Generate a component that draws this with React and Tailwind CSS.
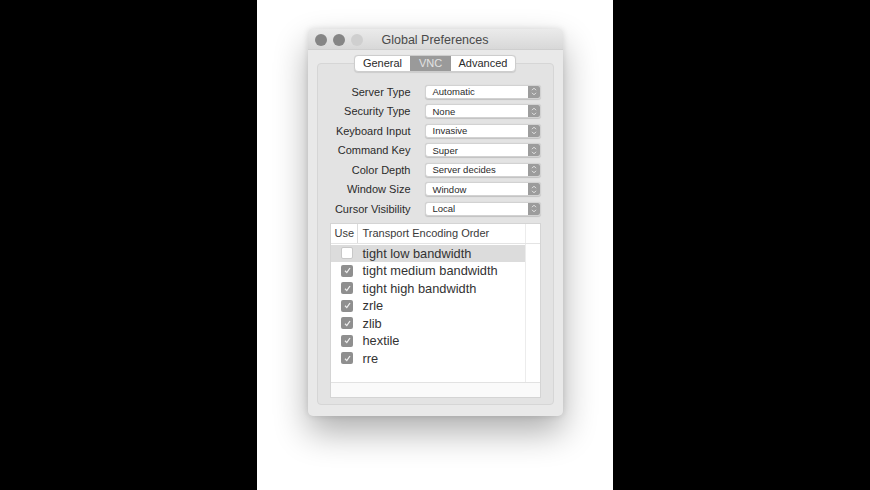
import React from "react";

const settings = [
  ["Server Type", "Automatic"],
  ["Security Type", "None"],
  ["Keyboard Input", "Invasive"],
  ["Command Key", "Super"],
  ["Color Depth", "Server decides"],
  ["Window Size", "Window"],
  ["Cursor Visibility", "Local"],
];

const encodings = [
  ["tight low bandwidth", false],
  ["tight medium bandwidth", true],
  ["tight high bandwidth", true],
  ["zrle", true],
  ["zlib", true],
  ["hextile", true],
  ["rre", true],
];

function PopUp({ value }) {
  return (
    <div className="flex h-[14px] w-[116px] items-stretch rounded-[3px] border border-[#d2d2d2] bg-white shadow-[0_0.5px_1px_rgba(0,0,0,0.15)]">
      <div className="flex flex-1 items-center pl-[7px] text-[9.5px] leading-none text-[#2a2a2a]">{value}</div>
      <div className="flex w-[12px] flex-col items-center justify-center rounded-r-[2px] bg-[#9c9c9c]">
        <svg width="6" height="9" viewBox="0 0 6 9" fill="none" stroke="#e6e6e6" strokeWidth="1">
          <path d="M1 3.2 L3 1.2 L5 3.2" />
          <path d="M1 5.8 L3 7.8 L5 5.8" />
        </svg>
      </div>
    </div>
  );
}

function Check({ on }) {
  if (!on) {
    return <div className="h-[12px] w-[12px] rounded-[2px] border border-[#c8c8c8] bg-white" />;
  }
  return (
    <div className="flex h-[12px] w-[12px] items-center justify-center rounded-[2px] bg-[#8f8f8f]">
      <svg width="9" height="9" viewBox="0 0 9 9" fill="none" stroke="#eeeeee" strokeWidth="1.3">
        <path d="M2 4.8 L3.8 6.6 L7 2" />
      </svg>
    </div>
  );
}

export default function App() {
  return (
    <div className="flex h-[490px] w-[870px] justify-center bg-black" style={{ fontFamily: '"Liberation Sans", Arial, sans-serif' }}>
      <div className="flex h-full w-[356px] justify-center bg-white pt-[29px]">
        <div className="h-[387px] w-[255px] rounded-[5px] bg-[#e9e9e9] shadow-[0_16px_34px_rgba(0,0,0,0.32),0_0_6px_rgba(0,0,0,0.12)]">
          {/* title bar */}
          <div className="relative flex h-[21px] items-center justify-center rounded-t-[5px] border-b border-[#cfcfcf] bg-gradient-to-b from-[#ebebeb] to-[#d8d8d8] pt-[2px]">
            <div className="absolute left-[7px] top-[5px] flex gap-[6px]">
              <div className="h-[12px] w-[12px] rounded-full bg-[#858585]" />
              <div className="h-[12px] w-[12px] rounded-full bg-[#858585]" />
              <div className="h-[12px] w-[12px] rounded-full bg-[#cfcfcf]" />
            </div>
            <span className="text-[12.5px] text-[#4a4a4a]">Global Preferences</span>
          </div>

          <div className="px-[9px] pt-[5px]">
            {/* tabs */}
            <div className="relative z-10 flex justify-center">
              <div className="flex h-[17px] overflow-hidden rounded-[4px] border border-[#cdcdcd] bg-white text-[11px] text-[#2b2b2b] shadow-[0_0.5px_1px_rgba(0,0,0,0.1)]">
                <div className="flex w-[55px] items-center justify-center">General</div>
                <div className="flex w-[41px] items-center justify-center bg-[#9a9a9a] text-[#e2e2e2]">VNC</div>
                <div className="flex w-[64px] items-center justify-center">Advanced</div>
              </div>
            </div>

            {/* group box */}
            <div className="-mt-[9px] h-[342px] w-[237px] rounded-[4px] border border-[#d6d6d6] bg-[#e3e3e3] pt-[18px]">
              <div className="flex flex-col">
                {settings.map(([label, value]) => (
                  <div key={label} className="flex h-[19.5px] items-center">
                    <div className="w-[93px] text-right text-[11px] text-[#2b2b2b]">{label}</div>
                    <div className="ml-[14px]">
                      <PopUp value={value} />
                    </div>
                  </div>
                ))}
              </div>

              {/* table */}
              <div className="ml-[12px] mt-[4px] flex h-[175px] w-[211px] flex-col border border-[#d4d4d4] bg-white">
                <div className="flex h-[20px] border-b border-[#e4e4e4] text-[11px] text-[#3a3a3a]">
                  <div className="flex w-[27px] items-center border-r border-[#dcdcdc] pl-[4px]">Use</div>
                  <div className="flex flex-1 items-center pl-[5px]">Transport Encoding Order</div>
                  <div className="w-[15px] border-l border-[#ececec]" />
                </div>
                <div className="flex flex-1">
                  <div className="flex-1 pt-[1px]">
                    {encodings.map(([name, on], i) => (
                      <div key={name} className={`flex h-[17.5px] items-center ${i === 0 ? "bg-[#dcdcdc]" : ""}`}>
                        <div className="flex w-[32px] justify-center pl-[1px]">
                          <Check on={on} />
                        </div>
                        <span className="text-[12.8px] text-[#333333]">{name}</span>
                      </div>
                    ))}
                  </div>
                  <div className="w-[15px] border-l border-[#ececec]" />
                </div>
                <div className="h-[15px] border-t border-[#e2e2e2] bg-[#fafafa]" />
              </div>
            </div>
          </div>
        </div>
      </div>
    </div>
  );
}
